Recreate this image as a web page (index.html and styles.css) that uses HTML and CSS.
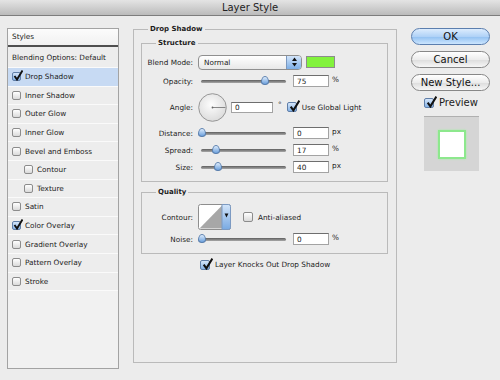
FILE: index.html
```html
<!DOCTYPE html>
<html>
<head>
  <meta charset="utf-8">
  <title>Layer Style</title>
  <link rel="stylesheet" href="styles.css">
</head>
<body>
  <div class="titlebar">Layer Style</div>

  <div class="dialog">
    <!-- left list of effects -->
    <div class="styles-list">
      <div class="styles-head">Styles</div>
      <div class="style-item blending">Blending Options: Default</div>
      <div class="style-item selected"><span class="check checked"><svg class="tick" viewBox="0 0 10 11"><path d="M1.5 6 L4 9.5 L9.5 0.5"/></svg></span>Drop Shadow</div>
      <div class="style-item"><span class="check"></span>Inner Shadow</div>
      <div class="style-item"><span class="check"></span>Outer Glow</div>
      <div class="style-item"><span class="check"></span>Inner Glow</div>
      <div class="style-item"><span class="check"></span>Bevel and Emboss</div>
      <div class="style-item sub"><span class="check"></span>Contour</div>
      <div class="style-item sub"><span class="check"></span>Texture</div>
      <div class="style-item"><span class="check"></span>Satin</div>
      <div class="style-item"><span class="check checked"><svg class="tick" viewBox="0 0 10 11"><path d="M1.5 6 L4 9.5 L9.5 0.5"/></svg></span>Color Overlay</div>
      <div class="style-item"><span class="check"></span>Gradient Overlay</div>
      <div class="style-item"><span class="check"></span>Pattern Overlay</div>
      <div class="style-item"><span class="check"></span>Stroke</div>
    </div>

    <!-- settings -->
    <fieldset class="group main-group">
      <legend>Drop Shadow</legend>

      <fieldset class="group sub-group">
        <legend>Structure</legend>
        <div class="rows">
          <div class="row row-blend">
            <label>Blend Mode:</label>
            <div class="select">
              <span class="select-value">Normal</span>
              <span class="select-arrows"><svg width="5" height="10" viewBox="0 0 5 10"><path d="M0 4 L2.5 0.5 L5 4Z M0 6 L2.5 9.5 L5 6Z"/></svg></span>
            </div>
            <div class="swatch"></div>
          </div>

          <div class="row">
            <label>Opacity:</label>
            <div class="slider"><span class="slider-track"></span><span class="slider-thumb" style="left: 63px"></span></div>
            <div class="value">75</div>
            <span class="unit">%</span>
          </div>

          <div class="row row-angle">
            <label>Angle:</label>
            <svg class="dial" width="29" height="29" viewBox="0 0 29 29">
              <defs>
                <radialGradient id="dialFill" cx="45%" cy="40%" r="65%">
                  <stop offset="0" stop-color="#fdfdfd"/>
                  <stop offset="1" stop-color="#d9d9d9"/>
                </radialGradient>
              </defs>
              <circle cx="14.5" cy="14.5" r="13.8" fill="url(#dialFill)" stroke="#8d8d8d" stroke-width="0.9"/>
              <line x1="14.5" y1="14.5" x2="27.5" y2="14.5" stroke="#7a7a7a" stroke-width="0.9"/>
              <circle cx="14.5" cy="14.5" r="0.9" fill="#666"/>
            </svg>
            <div class="value value-angle">0</div>
            <span class="unit deg">°</span>
            <span class="check checked big"><svg class="tick" viewBox="0 0 10 11"><path d="M1.5 6 L4 9.5 L9.5 0.5"/></svg></span>
            <span class="check-label">Use Global Light</span>
          </div>

          <div class="row">
            <label>Distance:</label>
            <div class="slider"><span class="slider-track"></span><span class="slider-thumb" style="left: 0px"></span></div>
            <div class="value">0</div>
            <span class="unit">px</span>
          </div>

          <div class="row">
            <label>Spread:</label>
            <div class="slider"><span class="slider-track"></span><span class="slider-thumb" style="left: 14px"></span></div>
            <div class="value">17</div>
            <span class="unit">%</span>
          </div>

          <div class="row">
            <label>Size:</label>
            <div class="slider"><span class="slider-track"></span><span class="slider-thumb" style="left: 16px"></span></div>
            <div class="value">40</div>
            <span class="unit">px</span>
          </div>
        </div>
      </fieldset>

      <fieldset class="group sub-group quality">
        <legend>Quality</legend>
        <div class="rows">
          <div class="row row-contour">
            <label>Contour:</label>
            <svg class="contour" width="33" height="26" viewBox="0 0 33 26">
              <defs>
                <linearGradient id="stripFill" x1="0" y1="0" x2="0" y2="1">
                  <stop offset="0" stop-color="#d3e5fa"/>
                  <stop offset="1" stop-color="#78a9e2"/>
                </linearGradient>
              </defs>
              <rect x="0.5" y="0.5" width="32" height="25" rx="2" fill="#fff" stroke="#8e8e8e"/>
              <polygon points="1.5,24.5 24,1.5 24,24.5" fill="#a7a7a7"/>
              <path d="M24 0.5 H30.5 A2 2 0 0 1 32.5 2.5 V23.5 A2 2 0 0 1 30.5 25.5 H24Z" fill="url(#stripFill)" stroke="#7c9ac2"/>
              <path d="M26.6 9.5 H30.4 L28.5 13.5Z" fill="#111"/>
            </svg>
            <span class="check aa"></span>
            <span class="check-label">Anti-aliased</span>
          </div>

          <div class="row">
            <label>Noise:</label>
            <div class="slider"><span class="slider-track"></span><span class="slider-thumb" style="left: 0px"></span></div>
            <div class="value">0</div>
            <span class="unit">%</span>
          </div>
        </div>
      </fieldset>

      <div class="row knock">
        <span class="check checked big"><svg class="tick" viewBox="0 0 10 11"><path d="M1.5 6 L4 9.5 L9.5 0.5"/></svg></span>
        <span class="check-label">Layer Knocks Out Drop Shadow</span>
      </div>
    </fieldset>

    <!-- buttons -->
    <div class="actions">
      <button class="btn btn-default">OK</button>
      <button class="btn">Cancel</button>
      <button class="btn">New Style...</button>
      <div class="preview-toggle">
        <span class="check checked big"><svg class="tick" viewBox="0 0 10 11"><path d="M1.5 6 L4 9.5 L9.5 0.5"/></svg></span>
        <span class="preview-label">Preview</span>
      </div>
      <div class="preview-box">
        <div class="preview-square"></div>
      </div>
    </div>
  </div>
</body>
</html>
```

FILE: styles.css
```css
/* Photoshop "Layer Style" dialog */
html, body {
  margin: 0;
  padding: 0;
}

body {
  width: 500px;
  height: 380px;
  overflow: hidden;
  background: #ececec;
  font-family: "DejaVu Sans", Verdana, sans-serif;
  font-size: 7.3px;
  color: #1c1c1c;
}

.titlebar {
  height: 15px;
  line-height: 16px;
  text-align: center;
  font-size: 10px;
  color: #222;
  background: linear-gradient(#e4e4e4, #bbbbbb);
  border-bottom: 1px solid #7d7d7d;
}

.dialog {
  display: flex;
  align-items: flex-start;
  padding-left: 7px;
}

/* Styles list */
.styles-list {
  margin-top: 12px;
  width: 112px;
  height: 341px;
  box-sizing: border-box;
  border: 1px solid #a3a3a3;
  background: #f1f1f1;
}

.styles-head {
  height: 16px;
  line-height: 16px;
  padding-left: 4px;
  background: linear-gradient(#fcfcfc, #f1f1f1);
  border-bottom: 2px solid #4f4f4f;
}

.style-item {
  display: flex;
  align-items: center;
  gap: 4px;
  height: 18.6px;
  box-sizing: border-box;
  padding-left: 4px;
  background: #ededed;
  border-bottom: 1px solid #fafafa;
}

.style-item.blending {
  height: 21px;
  padding-left: 4px;
}

.style-item.selected {
  background: #c7daf3;
}

.style-item.sub {
  padding-left: 16px;
}

/* checkboxes */
.check {
  position: relative;
  display: inline-block;
  flex-shrink: 0;
  width: 9px;
  height: 9px;
  box-sizing: border-box;
  border: 1px solid #8c8c8c;
  border-radius: 2px;
  background: linear-gradient(#ffffff, #dadada);
}

.check.big {
  width: 10px;
  height: 10px;
}

.check.checked {
  border-color: #5f7ea8;
  background: linear-gradient(#d6e6fa, #84b2e6);
}

.tick {
  position: absolute;
  left: 0;
  top: -3px;
  width: 10px;
  height: 11px;
  fill: none;
  stroke: #111;
  stroke-width: 1.9;
}

.check.big .tick {
  left: 1px;
  width: 11px;
  height: 12px;
}

.check-label {
  margin-left: 5px;
}

/* group boxes */
.group {
  margin: 0;
  min-width: 0;
  border: 1px solid #bababa;
}

.group legend {
  font-weight: bold;
  font-size: 7px;
  line-height: 10px;
  padding: 0 2px;
}

.main-group {
  margin: 8px 0 0 14px;
  width: 264px;
  height: 339px;
  box-sizing: border-box;
  padding: 4px 8px 0 7px;
}

.main-group > legend {
  margin-left: 7px;
}

.sub-group {
  padding: 6px 0 8px 0;
}

.sub-group > legend {
  margin-left: 14px;
}

.quality {
  margin-top: 5px;
  padding-top: 7px;
}

.rows {
  display: flex;
  flex-direction: column;
  gap: 5px;
}

.quality .rows {
  gap: 3px;
}

.row {
  display: flex;
  align-items: center;
  height: 12px;
}

.row > label {
  width: 51px;
  flex-shrink: 0;
  margin-right: 5px;
  text-align: right;
}

.row-blend {
  height: 16px;
}

.row-angle {
  height: 30px;
}

.row-contour {
  height: 26px;
}

/* blend mode select */
.select {
  display: flex;
  align-items: stretch;
  width: 104px;
  height: 15px;
  box-sizing: border-box;
  border: 1px solid #8f8f8f;
  border-radius: 4px;
  background: linear-gradient(#ffffff, #e8e8e8);
  overflow: hidden;
}

.select-value {
  flex: 1;
  padding-left: 5px;
  line-height: 13px;
}

.select-arrows {
  width: 14px;
  display: flex;
  align-items: center;
  justify-content: center;
  border-left: 1px solid #7b98bf;
  background: linear-gradient(#d3e5fa, #7caee6);
}

.select-arrows svg {
  fill: #111;
}

.swatch {
  margin-left: 4px;
  width: 29px;
  height: 12px;
  box-sizing: border-box;
  border: 1px solid #8c8c8c;
  background: #82f23c;
}

/* sliders */
.slider {
  position: relative;
  display: flex;
  align-items: center;
  width: 88px;
  height: 12px;
  box-sizing: border-box;
  padding-left: 3px;
}

.slider-track {
  flex: 1;
  height: 3px;
  border-radius: 2px;
  background: linear-gradient(#5e5e5e, #a8a8a8);
}

.slider-thumb {
  position: absolute;
  top: 1px;
  width: 8px;
  height: 9px;
  box-sizing: border-box;
  border: 1px solid #5a7fae;
  border-radius: 50% 50% 45% 45% / 65% 65% 35% 35%;
  background: linear-gradient(#dcebfc, #6da1dd);
}

.value {
  margin-left: 7px;
  width: 36px;
  height: 12px;
  box-sizing: border-box;
  padding-left: 3px;
  line-height: 11px;
  border: 1px solid #a3a3a3;
  border-top-color: #6e6e6e;
  background: #fff;
}

.unit {
  margin-left: 3px;
  align-self: flex-start;
  line-height: 9px;
}

/* angle */
.dial {
  flex-shrink: 0;
}

.value-angle {
  margin-left: 4px;
  width: 42px;
  height: 11px;
  line-height: 10px;
}

.deg {
  margin-left: 5px;
  align-self: center;
  margin-top: -6px;
}

.row-angle .check {
  margin-left: 5px;
}

/* contour */
.contour {
  flex-shrink: 0;
}

.check.aa {
  margin-left: 12px;
  width: 10px;
  height: 10px;
}

.knock {
  margin: 5px 0 0 59px;
  height: 11px;
}

/* buttons column */
.actions {
  margin: 12px 0 0 14px;
  width: 79px;
  display: flex;
  flex-direction: column;
}

.btn {
  height: 17px;
  margin: 0 0 6px 0;
  padding: 0;
  box-sizing: border-box;
  border: 1px solid #878787;
  border-radius: 9px;
  font-family: "DejaVu Sans", Verdana, sans-serif;
  font-size: 10px;
  line-height: 14px;
  color: #111;
  background: linear-gradient(#ffffff, #ececec 50%, #dcdcdc 51%, #f6f6f6);
}

.btn-default {
  border-color: #5b7eae;
  background: linear-gradient(#dcecfd, #b0d2f7 50%, #91c0f1 51%, #cbe5fe);
}

.preview-toggle {
  display: flex;
  align-items: center;
  height: 11px;
  margin-left: 13px;
}

.preview-label {
  margin-left: 5px;
  font-size: 10px;
}

.preview-box {
  margin: 8px 0 0 13px;
  width: 55px;
  height: 55px;
  box-sizing: border-box;
  border-top: 1px solid #b0b0b0;
  background: #d5d5d5;
  display: flex;
  align-items: center;
  justify-content: center;
}

.preview-square {
  width: 28px;
  height: 29px;
  box-sizing: border-box;
  border: 2px solid #8de88d;
  background: #fff;
  box-shadow: 0 0 2px #a6f0a6;
}
```
